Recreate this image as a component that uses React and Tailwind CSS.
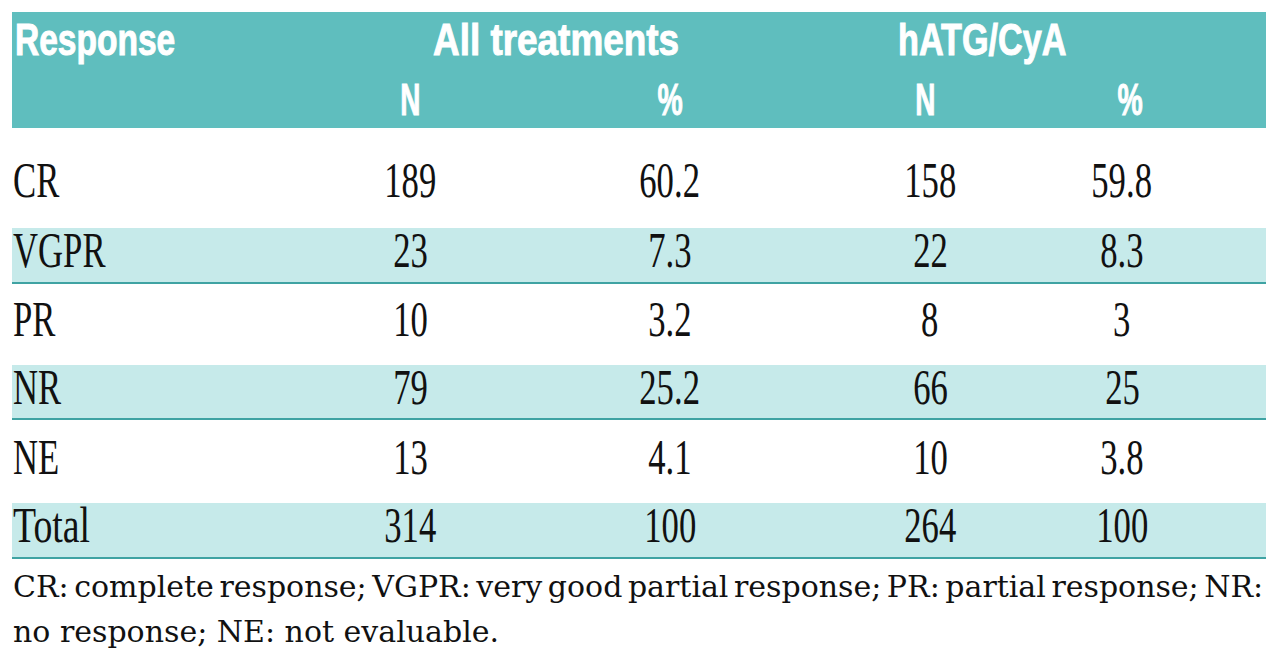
import React from "react";

const serif = { fontFamily: '"Liberation Serif", "Times New Roman", serif' };

const rows = [
  { label: "CR", v: ["189", "60.2", "158", "59.8"], shade: false, cls: "h-[100px] pt-[30px]" },
  { label: "VGPR", v: ["23", "7.3", "22", "8.3"], shade: true, cls: "h-[56px]" },
  { label: "PR", v: ["10", "3.2", "8", "3"], shade: false, cls: "h-[81px] pt-[13px]" },
  { label: "NR", v: ["79", "25.2", "66", "25"], shade: true, cls: "h-[55px]" },
  { label: "NE", v: ["13", "4.1", "10", "3.8"], shade: false, cls: "h-[83px] pt-[15px]" },
  { label: "Total", v: ["314", "100", "264", "100"], shade: true, cls: "h-[56px]" },
];

const grid = "grid grid-cols-[268px_260px_260px_260px_124px_1fr]";

function Row({ r }) {
  return (
    <div
      className={`${grid} ${r.cls} ${
        r.shade ? "bg-[#c6eaea] border-b-2 border-[#3fa3a3]" : ""
      } text-[51px] leading-[44px] text-[#111]`}
      style={serif}
    >
      <div className="pl-px">
        <span
          className={`inline-block origin-left whitespace-nowrap ${
            r.label === "Total" ? "scale-x-[0.74]" : "scale-x-[0.68]"
          }`}
        >
          {r.label}
        </span>
      </div>
      {r.v.map((x, i) => (
        <div key={i} className="text-center whitespace-nowrap">
          <span className="inline-block scale-x-[0.68]">{x}</span>
        </div>
      ))}
      <div />
    </div>
  );
}

export default function App() {
  const sans = { fontFamily: '"Liberation Sans", Arial, sans-serif' };
  return (
    <div className="w-[1280px] h-[659px] bg-white pt-[12px] px-[12px] overflow-hidden">
      <div className="w-[1254px]">
        <div
          className="h-[116px] bg-[#5fbebe] text-white font-bold text-[45px] leading-[45px] pt-[5px] flex flex-col gap-[15px] [-webkit-text-stroke:1px_white]"
          style={sans}
        >
          <div className={grid}>
            <div className="pl-[3px]">
              <span className="inline-block origin-left scale-x-[0.745] whitespace-nowrap">Response</span>
            </div>
            <div className="col-span-2 pl-[153px]">
              <span className="inline-block origin-left scale-x-[0.82] whitespace-nowrap">All treatments</span>
            </div>
            <div className="col-span-2 pl-[98px]">
              <span className="inline-block origin-left scale-x-[0.76] whitespace-nowrap">hATG/CyA</span>
            </div>
            <div />
          </div>
          <div className={grid}>
            <div />
            <div className="text-center">
              <span className="inline-block scale-x-[0.62]">N</span>
            </div>
            <div className="text-center">
              <span className="inline-block scale-x-[0.63]">%</span>
            </div>
            <div className="text-center pr-[10px]">
              <span className="inline-block scale-x-[0.62]">N</span>
            </div>
            <div className="text-center pl-[16px]">
              <span className="inline-block scale-x-[0.63]">%</span>
            </div>
            <div />
          </div>
        </div>
        {rows.map((r) => (
          <Row key={r.label} r={r} />
        ))}
        <div
          className="mt-[5px] text-[30px] leading-[45px] text-[#111] pl-px"
          style={{ fontFamily: '"DejaVu Serif", "Liberation Serif", serif' }}
        >
          <div className="whitespace-nowrap [word-spacing:-4px]">
            CR: complete response; VGPR: very good partial response; PR: partial response; NR:
          </div>
          <div className="whitespace-nowrap">no response; NE: not evaluable.</div>
        </div>
      </div>
    </div>
  );
}
